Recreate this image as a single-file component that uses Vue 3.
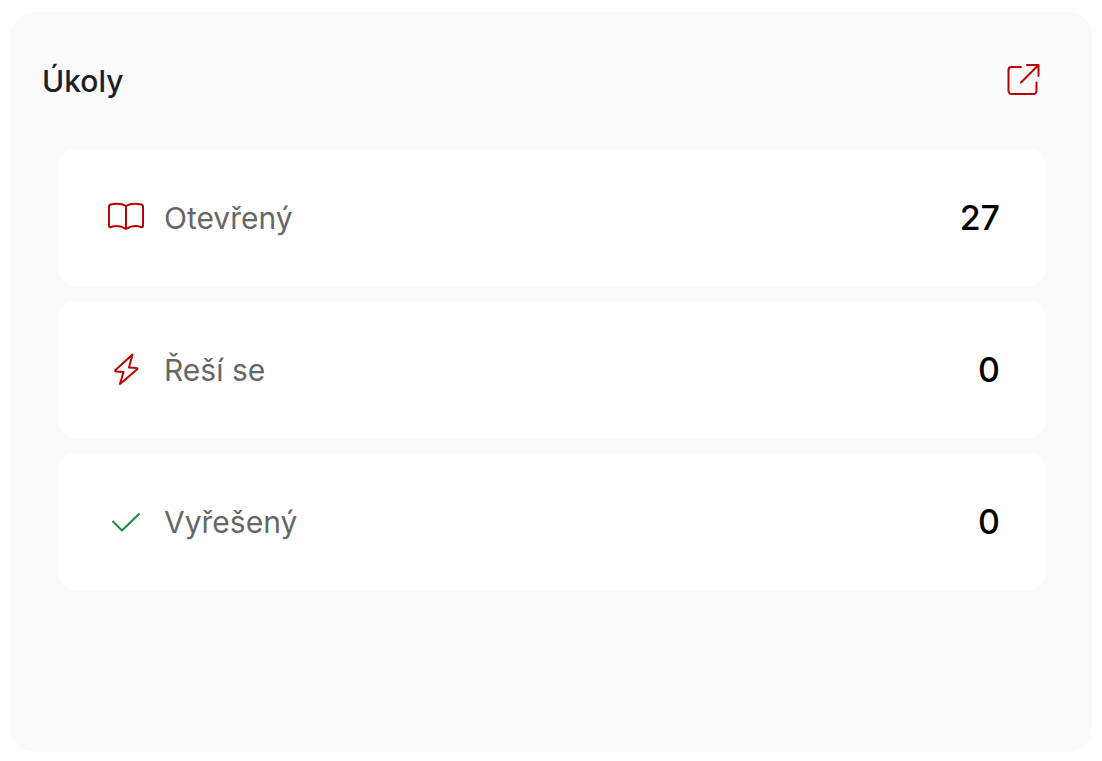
<script setup>
const rows = [
  { key: 'open', label: 'Otevřený', value: 27 },
  { key: 'progress', label: 'Řeší se', value: 0 },
  { key: 'done', label: 'Vyřešený', value: 0 },
]
</script>

<template>
  <main class="page">
    <section class="card" aria-labelledby="tasks-title">
      <header class="head">
        <h2 id="tasks-title">Úkoly</h2>
        <a href="#" class="open" aria-label="Úkoly">
          <svg width="36" height="36" viewBox="0 0 36 36" fill="none" stroke="currentColor" stroke-width="2" stroke-linecap="round" stroke-linejoin="round">
            <path d="M15 4H5.500a3 3 0 0 0-3 3v21a3 3 0 0 0 3 3h22a3 3 0 0 0 3-3V19.500M21 2h11.500v11M32 2.500 15 19.500" />
          </svg>
        </a>
      </header>
      <ul class="rows">
        <li v-for="row in rows" :key="row.key" class="row">
          <svg class="icon" :class="row.key" width="38" height="37" viewBox="0 0 38 37" fill="none" stroke="currentColor" stroke-width="2" stroke-linejoin="round">
            <path v-if="row.key === 'open'" d="M19 7C15 4.500 8 4.500 3.500 5.500Q2 6 2 7.500V27Q2 28.500 3.500 28.200C8 26.500 14 26.500 19 30C24 26.500 30 26.500 34.500 28.200Q36 28.500 36 27V7.500Q36 6 34.500 5.500C30 4.500 23 4.500 19 7V30" />
            <path v-else-if="row.key === 'progress'" d="M25.500 3.500 8 19.500Q8 20.500 9 20.500L16.500 21 13 33 30.500 18Q30.500 17 29.500 17L22 16.500Z" />
            <path v-else d="m5.500 18 9.500 9.500L32.500 10.500" />
          </svg>
          <span class="label">{{ row.label }}</span>
          <strong class="value">{{ row.value }}</strong>
        </li>
      </ul>
    </section>
  </main>
</template>

<style>
body { background: #fff; }
</style>

<style scoped>
.page {
  box-sizing: border-box;
  min-height: 100vh;
  padding: 12px 10px 9px 11px;
  display: flex;
  font-family: Inter, "Liberation Sans", sans-serif;
}
.card {
  box-sizing: border-box;
  flex: 1;
  padding: 49px 47px 32px;
  border-radius: 24px;
  background: #fafafa;
}
.head {
  display: flex;
  align-items: center;
  justify-content: space-between;
  height: 40px;
  margin: 0 3px 0 -16px;
}
h2 {
  margin: 0;
  font-size: 30px;
  line-height: 40px;
  font-weight: 500;
  color: #1b1f2a;
}
.open { display: flex; color: #b80000; }
.rows {
  display: grid;
  gap: 15px;
  margin: 48px 0 0;
  padding: 0;
  list-style: none;
}
.row {
  display: flex;
  align-items: center;
  height: 137px;
  box-sizing: border-box;
  padding: 0 45px 0 49px;
  border-radius: 16px;
  background: #fff;
}
.icon { color: #b80000; }
.icon.done { color: #198a3c; }
.label {
  flex: 1;
  margin-left: 19px;
  font-size: 30px;
  line-height: 40px;
  color: #666;
}
.value {
  font-size: 34px;
  line-height: 44px;
  font-weight: 500;
  color: #000;
}
</style>
